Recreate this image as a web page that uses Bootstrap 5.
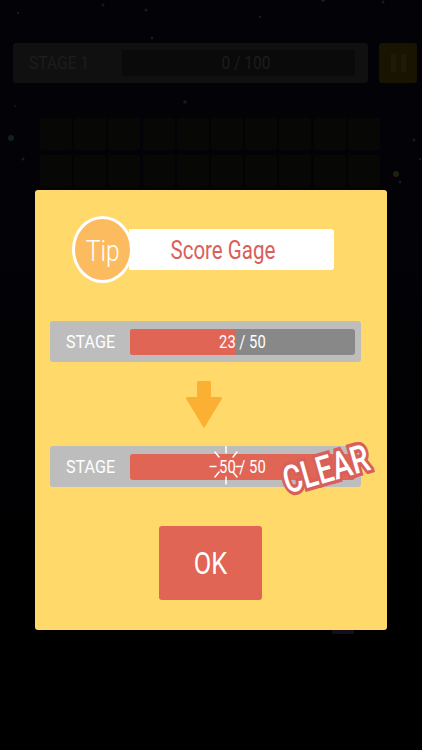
<!DOCTYPE html>
<html lang="en">
<head>
<meta charset="utf-8">
<title>Tip</title>
<link href="https://cdn.jsdelivr.net/npm/bootstrap@5.3.0/dist/css/bootstrap.min.css" rel="stylesheet">
<style>
html,body{width:422px;height:750px;overflow:hidden;background:#000;}
body{font-family:Roboto,"Liberation Sans",sans-serif;color:#fff;}
.squeeze{display:inline-block;transform:scaleX(.82);white-space:nowrap;}
.screen{width:422px;height:750px;position:relative;overflow:hidden;background:linear-gradient(#030207 0,#030207 190px,#000 630px);}
.stars{position:absolute;inset:0;}
.hud{padding:43px 5px 0 13px;gap:11px;height:83px;}
.hud-bar{width:355px;height:40px;background:#101010;border-radius:3px;padding:0 13px 0 16px;color:#1d1d1d;font-size:19px;}
.hud-name{transform-origin:left center;}
.hud-slot{width:93px;flex:none;}
.hud-track{width:233px;height:26px;background:#0a0a0a;border-radius:2px;padding-left:14px;}
.hud-pause{width:38px;height:40px;background:#181303;border-radius:3px;gap:5px;}
.hud-pause i{display:block;width:5px;height:18px;background:#201a05;}
.field{padding:35px 0 0 40px;display:grid;grid-template-columns:repeat(10,32px);column-gap:2.2px;row-gap:5px;}
.cell{height:32px;background:#070705;border-radius:2px;}
.sliver{position:absolute;left:332px;top:630px;width:22px;height:4px;background:#150c1c;}
.dialog{position:absolute;left:35px;top:190px;width:352px;height:440px;background:#ffd96a;border-radius:3px;}
.tip-row{margin:26px 0 0 37px;height:67px;}
.tip-badge{width:61px;height:67px;border-radius:50%;background:#fdbb5f;border:3px solid #fff;font-size:30px;z-index:1;flex:none;font-weight:300;padding-top:2px;}
.tip-title{width:205px;height:41px;margin-left:-4px;background:#fff;border-radius:0 3px 3px 0;color:#d9605a;font-size:25px;padding:2px 18px 0 0;}
.stage{width:311px;height:41px;margin-left:15px;background:#bdbdbd;border-radius:3px;font-size:19px;padding:0 6px 0 16px;}
.stage-one{margin-top:38px;}
.stage-two{margin-top:18px;position:relative;}
.stage-label{transform-origin:left center;transform:scaleX(.85);padding-top:1px;}
.stage-slot{width:64px;flex:none;}
.gage{width:225px;height:26px;background:#888;border-radius:3px;overflow:hidden;position:relative;}
.gage-fill{height:100%;background:#e06555;}
.gage-half{width:105px;}
.gage-full{width:100%;}
.gage-text{position:absolute;inset:0;font-size:18px;}
.down{display:block;margin:19px 0 0 151px;}
.spark{position:absolute;left:156px;top:0;}
.clear-tag{position:absolute;left:218px;top:4px;font-size:38px;font-weight:500;line-height:1;color:#fff;-webkit-text-stroke:7px #d9605a;paint-order:stroke fill;transform:rotate(-16deg) scaleX(.76);}
.ok-btn{display:block;width:103px;height:74px;margin:39px 0 0 124px;background:#e06555;border:0;border-radius:3px;color:#fff;font-size:31px;padding:2px 0 0;}
</style>
</head>
<body>
<div class="screen">
  <svg class="stars" width="422" height="750" viewBox="0 0 422 750" aria-hidden="true">
    <g fill="#151a24">
      <circle cx="146" cy="10" r="1.6"/><circle cx="103" cy="5" r="1.5"/><circle cx="323" cy="0" r="2"/><circle cx="383" cy="2" r="1.5"/>
      <circle cx="18" cy="13" r="1.2"/><circle cx="260" cy="17" r="1.3"/><circle cx="152" cy="38" r="1.5"/><circle cx="185" cy="102" r="1.8"/>
      <circle cx="15" cy="106" r="1"/><circle cx="23" cy="159" r="1.5"/><circle cx="414" cy="140" r="1.5"/><circle cx="420" cy="159" r="1.2"/><circle cx="400" cy="182" r="1.5"/>
    </g>
    <circle cx="11" cy="138" r="3" fill="#0f2220"/>
    <circle cx="396" cy="174" r="3" fill="#211e0c"/>
  </svg>
  <div class="hud d-flex position-relative">
    <div class="hud-bar d-flex align-items-center">
      <div class="hud-slot"><span class="squeeze hud-name">STAGE 1</span></div>
      <div class="hud-track d-flex align-items-center justify-content-center"><span class="squeeze">0 / 100</span></div>
    </div>
    <div class="hud-pause d-flex align-items-center justify-content-center"><i></i><i></i></div>
  </div>
  <div class="field position-relative">
    <div class="cell"></div><div class="cell"></div><div class="cell"></div><div class="cell"></div><div class="cell"></div><div class="cell"></div><div class="cell"></div><div class="cell"></div><div class="cell"></div><div class="cell"></div>
    <div class="cell"></div><div class="cell"></div><div class="cell"></div><div class="cell"></div><div class="cell"></div><div class="cell"></div><div class="cell"></div><div class="cell"></div><div class="cell"></div><div class="cell"></div>
  </div>
  <div class="sliver"></div>
  <div class="dialog d-flex flex-column">
    <div class="tip-row d-flex align-items-center">
      <div class="tip-badge d-flex align-items-center justify-content-center"><span class="squeeze">Tip</span></div>
      <div class="tip-title d-flex align-items-center justify-content-center"><span class="squeeze">Score Gage</span></div>
    </div>
    <div class="stage stage-one d-flex align-items-center">
      <div class="stage-slot"><span class="squeeze stage-label">STAGE</span></div>
      <div class="gage">
        <div class="gage-fill gage-half"></div>
        <div class="gage-text d-flex align-items-center justify-content-center"><span class="squeeze">23 / 50</span></div>
      </div>
    </div>
    <svg class="down" width="36" height="47" viewBox="0 0 36 47" aria-hidden="true">
      <path d="M11 1.5a1.5 1.5 0 0 1 1.5-1.5h11a1.5 1.5 0 0 1 1.5 1.5V16h9.5c1.2 0 1.8 1 1.2 2L18.8 46a1 1 0 0 1-1.6 0L.3 18c-.6-1 0-2 1.2-2H11z" fill="#fbb034"/>
    </svg>
    <div class="stage stage-two d-flex align-items-center">
      <div class="stage-slot"><span class="squeeze stage-label">STAGE</span></div>
      <div class="gage">
        <div class="gage-fill gage-full"></div>
        <div class="gage-text d-flex align-items-center justify-content-center"><span class="squeeze">50 / 50</span></div>
      </div>
      <svg class="spark" width="40" height="40" viewBox="0 0 40 40" aria-hidden="true">
        <g stroke="#fff" stroke-width="1.5" stroke-linecap="round" fill="none">
          <path d="M20 0v7M20 31v7M4 20.5h6M30 20.5h6M9 6l4 5M31 6l-4 5M9 31l4-5M31 31l-4-5"/>
        </g>
      </svg>
      <span class="clear-tag">CLEAR</span>
    </div>
    <button type="button" class="ok-btn btn"><span class="squeeze">OK</span></button>
  </div>
</div>
<script src="https://cdn.jsdelivr.net/npm/bootstrap@5.3.0/dist/js/bootstrap.bundle.min.js"></script>
</body>
</html>
